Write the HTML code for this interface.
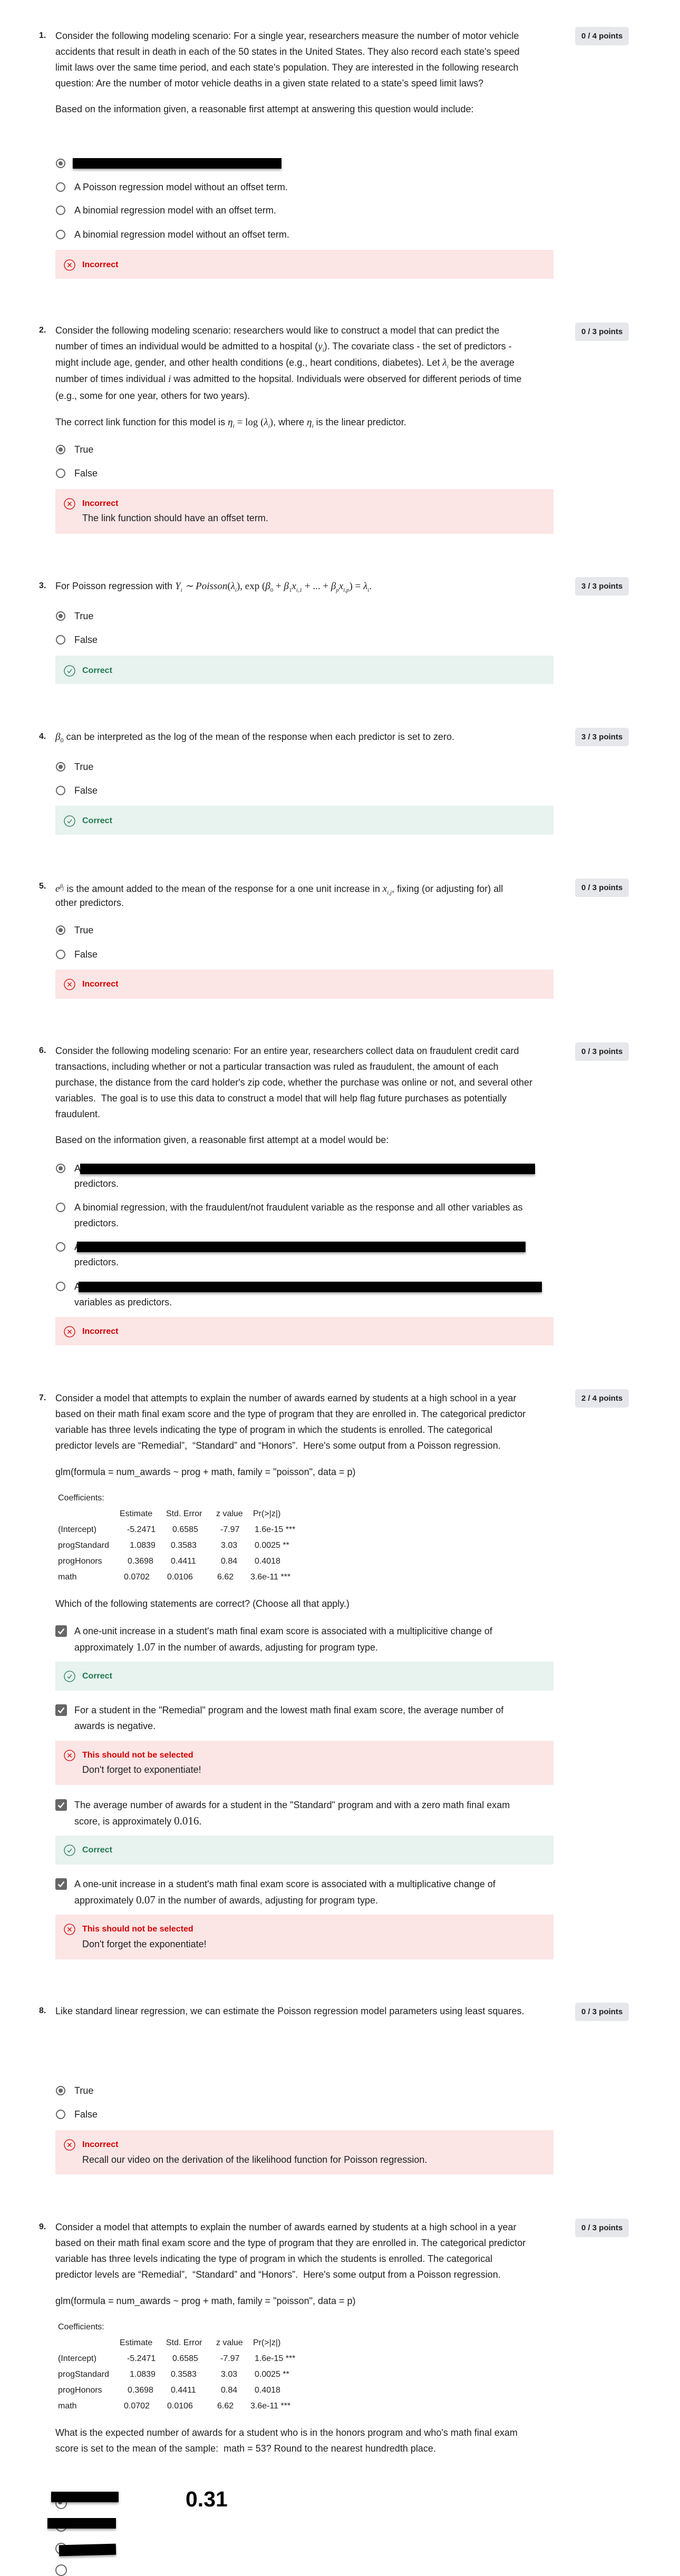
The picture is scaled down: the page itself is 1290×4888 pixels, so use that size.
<!DOCTYPE html>
<html><head><meta charset="utf-8">
<style>
html,body{margin:0;padding:0;background:#fff;}
body{width:1290px;height:4870px;position:relative;overflow:hidden;font-family:"Liberation Sans",Arial,sans-serif;color:#1f1f1f;}
.t{position:absolute;white-space:nowrap;line-height:30px;height:30px;font-size:18px;}
.n{position:absolute;font-weight:bold;font-size:16px;line-height:30px;left:74px;}
.b{position:absolute;left:1091px;width:102px;height:35px;background:#e5e7ea;border-radius:5px;font-weight:bold;font-size:15px;line-height:35px;text-align:center;color:#1f1f1f;}
.r{position:absolute;left:106px;width:18px;height:18px;border:2px solid #666;border-radius:50%;box-sizing:border-box;background:#fff;}
.r.s::after{content:"";position:absolute;left:3px;top:3px;width:8px;height:8px;border-radius:50%;background:#666;}
.c{position:absolute;left:105px;width:22px;height:22px;background:#666;border-radius:3px;}
.c svg{position:absolute;left:3px;top:3px;}
.fb{position:absolute;left:105px;width:945px;}
.bad{background:#fbe5e5;}
.good{background:#e8f2ef;}
.ft{position:absolute;left:156px;font-weight:bold;font-size:16px;line-height:30px;white-space:nowrap;}
.ft.red{color:#d10000;}
.ft.grn{color:#1f7a50;}
.ic{position:absolute;left:121px;}
.fx{position:absolute;left:156px;font-size:18px;line-height:30px;white-space:nowrap;}
.blk{position:absolute;background:#000;box-shadow:0 3px 4px rgba(0,0,0,.35);}
i.m{font-family:"Liberation Serif",serif;font-size:19px;}
.tb{position:absolute;font-size:16px;line-height:30px;white-space:nowrap;}
</style></head><body>

<!-- Q1 -->
<div class="n" style="top:53px">1.</div>
<div class="b" style="top:51px">0 / 4 points</div>
<div class="t" style="left:105px;top:53px">Consider the following modeling scenario: For a single year, researchers measure the number of motor vehicle</div>
<div class="t" style="left:105px;top:83px">accidents that result in death in each of the 50 states in the United States. They also record each state's speed</div>
<div class="t" style="left:105px;top:113px">limit laws over the same time period, and each state's population. They are interested in the following research</div>
<div class="t" style="left:105px;top:143px">question: Are the number of motor vehicle deaths in a given state related to a state’s speed limit laws?</div>
<div class="t" style="left:105px;top:192px">Based on the information given, a reasonable first attempt at answering this question would include:</div>
<div class="r s" style="top:301px"></div>
<div class="blk" style="left:138px;top:300px;width:396px;height:20px"></div>
<div class="r" style="top:346px"></div><div class="t" style="left:141px;top:340px">A Poisson regression model without an offset term.</div>
<div class="r" style="top:390px"></div><div class="t" style="left:141px;top:384px">A binomial regression model with an offset term.</div>
<div class="r" style="top:436px"></div><div class="t" style="left:141px;top:430px">A binomial regression model without an offset term.</div>
<div class="fb bad" style="top:474px;height:55px"></div>
<svg class="ic" style="top:492px" width="22" height="22" viewBox="0 0 22 22"><circle cx="11" cy="11" r="10" fill="none" stroke="#d10000" stroke-width="1.3"/><path d="M7.5 7.5L14.5 14.5M14.5 7.5L7.5 14.5" stroke="#d10000" stroke-width="1.3"/></svg>
<div class="ft red" style="top:488px">Incorrect</div>

<!-- Q2 -->
<div class="n" style="top:612px">2.</div>
<div class="b" style="top:612px">0 / 3 points</div>
<div class="t" style="left:105px;top:612px">Consider the following modeling scenario: researchers would like to construct a model that can predict the</div>
<div class="t" style="left:105px;top:642px">number of times an individual would be admitted to a hospital (<i class="m">y<sub style="font-size:11px">i</sub></i>). The covariate class - the set of predictors -</div>
<div class="t" style="left:105px;top:673px">might include age, gender, and other health conditions (e.g., heart conditions, diabetes). Let <i class="m">λ<sub style="font-size:11px">i</sub></i> be the average</div>
<div class="t" style="left:105px;top:704px">number of times individual <i class="m">i</i> was admitted to the hopsital. Individuals were observed for different periods of time</div>
<div class="t" style="left:105px;top:736px">(e.g., some for one year, others for two years).</div>
<div class="t" style="left:105px;top:786px">The correct link function for this model is <i class="m">η<sub style="font-size:11px">i</sub></i> <span style="font-family:'Liberation Serif',serif;font-size:19px">= log (<i>λ<sub style="font-size:11px">i</sub></i>)</span>, where <i class="m">η<sub style="font-size:11px">i</sub></i> is the linear predictor.</div>
<div class="r s" style="top:844px"></div><div class="t" style="left:141px;top:838px">True</div>
<div class="r" style="top:889px"></div><div class="t" style="left:141px;top:883px">False</div>
<div class="fb bad" style="top:928px;height:85px"></div>
<svg class="ic" style="top:945px" width="22" height="22" viewBox="0 0 22 22"><circle cx="11" cy="11" r="10" fill="none" stroke="#d10000" stroke-width="1.3"/><path d="M7.5 7.5L14.5 14.5M14.5 7.5L7.5 14.5" stroke="#d10000" stroke-width="1.3"/></svg>
<div class="ft red" style="top:941px">Incorrect</div>
<div class="fx" style="top:968px">The link function should have an offset term.</div>

<!-- Q3 -->
<div class="n" style="top:1097px">3.</div>
<div class="b" style="top:1095px">3 / 3 points</div>
<div class="t" style="left:105px;top:1097px">For Poisson regression with <i class="m">Y<sub style="font-size:11px">i</sub> ∼ Poisson</i><span style="font-family:'Liberation Serif',serif;font-size:19px">(<i>λ<sub style="font-size:11px">i</sub></i>), exp (<i>β</i><sub style="font-size:11px">0</sub> + <i>β</i><sub style="font-size:11px">1</sub><i>x<sub style="font-size:11px">i,1</sub></i> + ... + <i>β<sub style="font-size:11px">p</sub>x<sub style="font-size:11px">i,p</sub></i>) = <i>λ<sub style="font-size:11px">i</sub></i></span>.</div>
<div class="r s" style="top:1160px"></div><div class="t" style="left:141px;top:1154px">True</div>
<div class="r" style="top:1205px"></div><div class="t" style="left:141px;top:1199px">False</div>
<div class="fb good" style="top:1244px;height:54px"></div>
<svg class="ic" style="top:1262px" width="22" height="22" viewBox="0 0 22 22"><circle cx="11" cy="11" r="10" fill="none" stroke="#1f7a50" stroke-width="1.3"/><path d="M7 11.5L10 14.5L15 8" fill="none" stroke="#1f7a50" stroke-width="1.3"/></svg>
<div class="ft grn" style="top:1258px">Correct</div>

<!-- Q4 -->
<div class="n" style="top:1383px">4.</div>
<div class="b" style="top:1381px">3 / 3 points</div>
<div class="t" style="left:105px;top:1383px"><i class="m">β</i><sub style="font-size:11px">0</sub> can be interpreted as the log of the mean of the response when each predictor is set to zero.</div>
<div class="r s" style="top:1446px"></div><div class="t" style="left:141px;top:1440px">True</div>
<div class="r" style="top:1491px"></div><div class="t" style="left:141px;top:1485px">False</div>
<div class="fb good" style="top:1529px;height:55px"></div>
<svg class="ic" style="top:1547px" width="22" height="22" viewBox="0 0 22 22"><circle cx="11" cy="11" r="10" fill="none" stroke="#1f7a50" stroke-width="1.3"/><path d="M7 11.5L10 14.5L15 8" fill="none" stroke="#1f7a50" stroke-width="1.3"/></svg>
<div class="ft grn" style="top:1543px">Correct</div>

<!-- Q5 -->
<div class="n" style="top:1667px">5.</div>
<div class="b" style="top:1667px">0 / 3 points</div>
<div class="t" style="left:105px;top:1667px"><i class="m">e<sup style="font-size:11px">β<sub style="font-size:9px">j</sub></sup></i> is the amount added to the mean of the response for a one unit increase in <i class="m">x<sub style="font-size:11px">i,j</sub></i>, fixing (or adjusting for) all</div>
<div class="t" style="left:105px;top:1698px">other predictors.</div>
<div class="r s" style="top:1756px"></div><div class="t" style="left:141px;top:1750px">True</div>
<div class="r" style="top:1802px"></div><div class="t" style="left:141px;top:1796px">False</div>
<div class="fb bad" style="top:1840px;height:55px"></div>
<svg class="ic" style="top:1857px" width="22" height="22" viewBox="0 0 22 22"><circle cx="11" cy="11" r="10" fill="none" stroke="#d10000" stroke-width="1.3"/><path d="M7.5 7.5L14.5 14.5M14.5 7.5L7.5 14.5" stroke="#d10000" stroke-width="1.3"/></svg>
<div class="ft red" style="top:1853px">Incorrect</div>

<!-- Q6 -->
<div class="n" style="top:1979px">6.</div>
<div class="b" style="top:1978px">0 / 3 points</div>
<div class="t" style="left:105px;top:1979px">Consider the following modeling scenario: For an entire year, researchers collect data on fraudulent credit card</div>
<div class="t" style="left:105px;top:2009px">transactions, including whether or not a particular transaction was ruled as fraudulent, the amount of each</div>
<div class="t" style="left:105px;top:2039px">purchase, the distance from the card holder's zip code, whether the purchase was online or not, and several other</div>
<div class="t" style="left:105px;top:2069px">variables.&nbsp; The goal is to use this data to construct a model that will help flag future purchases as potentially</div>
<div class="t" style="left:105px;top:2099px">fraudulent.</div>
<div class="t" style="left:105px;top:2148px">Based on the information given, a reasonable first attempt at a model would be:</div>
<div class="r s" style="top:2208px"></div><div class="t" style="left:141px;top:2202px">A</div>
<div class="blk" style="left:152px;top:2208px;width:863px;height:20px"></div>
<div class="t" style="left:141px;top:2231px">predictors.</div>
<div class="r" style="top:2282px"></div><div class="t" style="left:141px;top:2276px">A binomial regression, with the fraudulent/not fraudulent variable as the response and all other variables as</div>
<div class="t" style="left:141px;top:2306px">predictors.</div>
<div class="r" style="top:2357px"></div><div class="t" style="left:141px;top:2351px">A</div>
<div class="blk" style="left:146px;top:2356px;width:851px;height:20px"></div>
<div class="t" style="left:141px;top:2380px">predictors.</div>
<div class="r" style="top:2432px"></div><div class="t" style="left:141px;top:2426px">A</div>
<div class="blk" style="left:149px;top:2432px;width:879px;height:20px"></div>
<div class="t" style="left:141px;top:2456px">variables as predictors.</div>
<div class="fb bad" style="top:2499px;height:54px"></div>
<svg class="ic" style="top:2516px" width="22" height="22" viewBox="0 0 22 22"><circle cx="11" cy="11" r="10" fill="none" stroke="#d10000" stroke-width="1.3"/><path d="M7.5 7.5L14.5 14.5M14.5 7.5L7.5 14.5" stroke="#d10000" stroke-width="1.3"/></svg>
<div class="ft red" style="top:2512px">Incorrect</div>

<!-- Q7 -->
<div class="n" style="top:2638px">7.</div>
<div class="b" style="top:2636px">2 / 4 points</div>
<div class="t" style="left:105px;top:2638px">Consider a model that attempts to explain the number of awards earned by students at a high school in a year</div>
<div class="t" style="left:105px;top:2668px">based on their math final exam score and the type of program that they are enrolled in. The categorical predictor</div>
<div class="t" style="left:105px;top:2698px">variable has three levels indicating the type of program in which the students is enrolled. The categorical</div>
<div class="t" style="left:105px;top:2728px">predictor levels are “Remedial”,&nbsp; “Standard” and “Honors”.&nbsp; Here's some output from a Poisson regression.</div>
<div class="t" style="left:105px;top:2778px">glm(formula = num_awards ~ prog + math, family = "poisson", data = p)</div>
<div class="tb" style="left:110px;top:2828px">Coefficients:</div>
<div class="tb" style="left:227px;top:2858px">Estimate</div><div class="tb" style="left:315px;top:2858px">Std. Error</div><div class="tb" style="left:410px;top:2858px">z value</div><div class="tb" style="left:480px;top:2858px">Pr(&gt;|z|)</div>
<div class="tb" style="left:110px;top:2888px">(Intercept)</div><div class="tb" style="left:241px;top:2888px">-5.2471</div><div class="tb" style="left:327px;top:2888px">0.6585</div><div class="tb" style="left:418px;top:2888px">-7.97</div><div class="tb" style="left:483px;top:2888px">1.6e-15 ***</div>
<div class="tb" style="left:110px;top:2918px">progStandard</div><div class="tb" style="left:246px;top:2918px">1.0839</div><div class="tb" style="left:324px;top:2918px">0.3583</div><div class="tb" style="left:419px;top:2918px">3.03</div><div class="tb" style="left:483px;top:2918px">0.0025 **</div>
<div class="tb" style="left:110px;top:2948px">progHonors</div><div class="tb" style="left:242px;top:2948px">0.3698</div><div class="tb" style="left:324px;top:2948px">0.4411</div><div class="tb" style="left:419px;top:2948px">0.84</div><div class="tb" style="left:483px;top:2948px">0.4018</div>
<div class="tb" style="left:110px;top:2978px">math</div><div class="tb" style="left:235px;top:2978px">0.0702</div><div class="tb" style="left:317px;top:2978px">0.0106</div><div class="tb" style="left:412px;top:2978px">6.62</div><div class="tb" style="left:475px;top:2978px">3.6e-11 ***</div>
<div class="t" style="left:105px;top:3028px">Which of the following statements are correct? (Choose all that apply.)</div>

<div class="c" style="top:3084px"><svg width="16" height="16" viewBox="0 0 16 16"><path d="M2.5 8.5L6.5 12.5L13.5 3.5" fill="none" stroke="#fff" stroke-width="2.4"/></svg></div>
<div class="t" style="left:141px;top:3080px">A one-unit increase in a student's math final exam score is associated with a multiplicitive change of</div>
<div class="t" style="left:141px;top:3110px">approximately <span style="font-family:'Liberation Serif',serif;font-size:21px">1.07</span> in the number of awards, adjusting for program type.</div>
<div class="fb good" style="top:3153px;height:55px"></div>
<svg class="ic" style="top:3170px" width="22" height="22" viewBox="0 0 22 22"><circle cx="11" cy="11" r="10" fill="none" stroke="#1f7a50" stroke-width="1.3"/><path d="M7 11.5L10 14.5L15 8" fill="none" stroke="#1f7a50" stroke-width="1.3"/></svg>
<div class="ft grn" style="top:3166px">Correct</div>

<div class="c" style="top:3234px"><svg width="16" height="16" viewBox="0 0 16 16"><path d="M2.5 8.5L6.5 12.5L13.5 3.5" fill="none" stroke="#fff" stroke-width="2.4"/></svg></div>
<div class="t" style="left:141px;top:3230px">For a student in the "Remedial" program and the lowest math final exam score, the average number of</div>
<div class="t" style="left:141px;top:3260px">awards is negative.</div>
<div class="fb bad" style="top:3303px;height:84px"></div>
<svg class="ic" style="top:3320px" width="22" height="22" viewBox="0 0 22 22"><circle cx="11" cy="11" r="10" fill="none" stroke="#d10000" stroke-width="1.3"/><path d="M7.5 7.5L14.5 14.5M14.5 7.5L7.5 14.5" stroke="#d10000" stroke-width="1.3"/></svg>
<div class="ft red" style="top:3316px">This should not be selected</div>
<div class="fx" style="top:3343px">Don't forget to exponentiate!</div>

<div class="c" style="top:3414px"><svg width="16" height="16" viewBox="0 0 16 16"><path d="M2.5 8.5L6.5 12.5L13.5 3.5" fill="none" stroke="#fff" stroke-width="2.4"/></svg></div>
<div class="t" style="left:141px;top:3410px">The average number of awards for a student in the "Standard" program and with a zero math final exam</div>
<div class="t" style="left:141px;top:3440px">score, is approximately <span style="font-family:'Liberation Serif',serif;font-size:21px">0.016</span>.</div>
<div class="fb good" style="top:3483px;height:55px"></div>
<svg class="ic" style="top:3500px" width="22" height="22" viewBox="0 0 22 22"><circle cx="11" cy="11" r="10" fill="none" stroke="#1f7a50" stroke-width="1.3"/><path d="M7 11.5L10 14.5L15 8" fill="none" stroke="#1f7a50" stroke-width="1.3"/></svg>
<div class="ft grn" style="top:3496px">Correct</div>

<div class="c" style="top:3564px"><svg width="16" height="16" viewBox="0 0 16 16"><path d="M2.5 8.5L6.5 12.5L13.5 3.5" fill="none" stroke="#fff" stroke-width="2.4"/></svg></div>
<div class="t" style="left:141px;top:3560px">A one-unit increase in a student's math final exam score is associated with a multiplicative change of</div>
<div class="t" style="left:141px;top:3590px">approximately <span style="font-family:'Liberation Serif',serif;font-size:21px">0.07</span> in the number of awards, adjusting for program type.</div>
<div class="fb bad" style="top:3633px;height:85px"></div>
<svg class="ic" style="top:3650px" width="22" height="22" viewBox="0 0 22 22"><circle cx="11" cy="11" r="10" fill="none" stroke="#d10000" stroke-width="1.3"/><path d="M7.5 7.5L14.5 14.5M14.5 7.5L7.5 14.5" stroke="#d10000" stroke-width="1.3"/></svg>
<div class="ft red" style="top:3646px">This should not be selected</div>
<div class="fx" style="top:3674px">Don't forget the exponentiate!</div>

<!-- Q8 -->
<div class="n" style="top:3801px">8.</div>
<div class="b" style="top:3800px">0 / 3 points</div>
<div class="t" style="left:105px;top:3801px">Like standard linear regression, we can estimate the Poisson regression model parameters using least squares.</div>
<div class="r s" style="top:3958px"></div><div class="t" style="left:141px;top:3952px">True</div>
<div class="r" style="top:4003px"></div><div class="t" style="left:141px;top:3997px">False</div>
<div class="fb bad" style="top:4042px;height:84px"></div>
<svg class="ic" style="top:4059px" width="22" height="22" viewBox="0 0 22 22"><circle cx="11" cy="11" r="10" fill="none" stroke="#d10000" stroke-width="1.3"/><path d="M7.5 7.5L14.5 14.5M14.5 7.5L7.5 14.5" stroke="#d10000" stroke-width="1.3"/></svg>
<div class="ft red" style="top:4055px">Incorrect</div>
<div class="fx" style="top:4083px">Recall our video on the derivation of the likelihood function for Poisson regression.</div>

<!-- Q9 -->
<div class="n" style="top:4211px">9.</div>
<div class="b" style="top:4210px">0 / 3 points</div>
<div class="t" style="left:105px;top:4211px">Consider a model that attempts to explain the number of awards earned by students at a high school in a year</div>
<div class="t" style="left:105px;top:4241px">based on their math final exam score and the type of program that they are enrolled in. The categorical predictor</div>
<div class="t" style="left:105px;top:4271px">variable has three levels indicating the type of program in which the students is enrolled. The categorical</div>
<div class="t" style="left:105px;top:4301px">predictor levels are “Remedial”,&nbsp; “Standard” and “Honors”.&nbsp; Here's some output from a Poisson regression.</div>
<div class="t" style="left:105px;top:4351px">glm(formula = num_awards ~ prog + math, family = "poisson", data = p)</div>
<div class="tb" style="left:110px;top:4401px">Coefficients:</div>
<div class="tb" style="left:227px;top:4431px">Estimate</div><div class="tb" style="left:315px;top:4431px">Std. Error</div><div class="tb" style="left:410px;top:4431px">z value</div><div class="tb" style="left:480px;top:4431px">Pr(&gt;|z|)</div>
<div class="tb" style="left:110px;top:4461px">(Intercept)</div><div class="tb" style="left:241px;top:4461px">-5.2471</div><div class="tb" style="left:327px;top:4461px">0.6585</div><div class="tb" style="left:418px;top:4461px">-7.97</div><div class="tb" style="left:483px;top:4461px">1.6e-15 ***</div>
<div class="tb" style="left:110px;top:4491px">progStandard</div><div class="tb" style="left:246px;top:4491px">1.0839</div><div class="tb" style="left:324px;top:4491px">0.3583</div><div class="tb" style="left:419px;top:4491px">3.03</div><div class="tb" style="left:483px;top:4491px">0.0025 **</div>
<div class="tb" style="left:110px;top:4521px">progHonors</div><div class="tb" style="left:242px;top:4521px">0.3698</div><div class="tb" style="left:324px;top:4521px">0.4411</div><div class="tb" style="left:419px;top:4521px">0.84</div><div class="tb" style="left:483px;top:4521px">0.4018</div>
<div class="tb" style="left:110px;top:4551px">math</div><div class="tb" style="left:235px;top:4551px">0.0702</div><div class="tb" style="left:317px;top:4551px">0.0106</div><div class="tb" style="left:412px;top:4551px">6.62</div><div class="tb" style="left:475px;top:4551px">3.6e-11 ***</div>
<div class="t" style="left:105px;top:4601px">What is the expected number of awards for a student who is in the honors program and who's math final exam</div>
<div class="t" style="left:105px;top:4631px">score is set to the mean of the sample:&nbsp; math = 53? Round to the nearest hundredth place.</div>

<div class="r s" style="top:4739px;left:105px;width:22px;height:22px"></div>
<div class="r" style="top:4782px;left:105px;width:22px;height:22px"></div>
<div class="r" style="top:4825px;left:105px;width:22px;height:22px"></div>
<div class="r" style="top:4866px;left:105px;width:22px;height:22px"></div>
<div class="blk" style="left:97px;top:4728px;width:128px;height:20px"></div>
<div class="blk" style="left:90px;top:4778px;width:130px;height:20px"></div>
<div class="blk" style="left:112px;top:4828px;width:108px;height:21px;transform:rotate(-1.5deg)"></div>
<div style="position:absolute;left:352px;top:4718px;font-size:41px;font-weight:bold;line-height:48px;color:#000">0.31</div>

</body></html>
